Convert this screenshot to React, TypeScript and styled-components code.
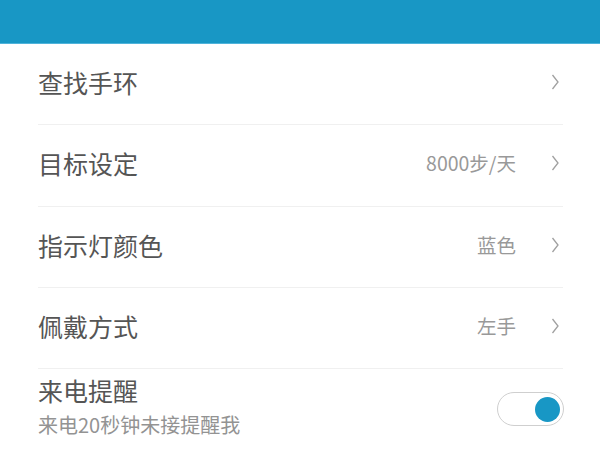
import React from "react";
import styled, { createGlobalStyle } from "styled-components";

const Global = createGlobalStyle`
  html, body { margin: 0; padding: 0; background: #ffffff; }
  body { font-family: "Noto Sans CJK SC", "Noto Sans", sans-serif; }
`;

const Page = styled.div`
  width: 600px;
  height: 450px;
  overflow: hidden;
  background: #ffffff;
`;

const Header = styled.div`
  height: 43px;
  background: #1897c5;
  border-bottom: 1px solid #4fb3da;
`;

const List = styled.div`
  display: flex;
  flex-direction: column;
  padding: 0 37px 0 38px;
`;

const Row = styled.div`
  display: flex;
  align-items: center;
  height: 81.3px;
  padding-bottom: 4px;
  box-sizing: border-box;
  border-bottom: 1px solid #f0f0f0;
`;

const ToggleRow = styled.div`
  display: flex;
  align-items: center;
  padding: 6px 0 20px;
`;

const TextCol = styled.div`
  flex: 1;
  display: flex;
  flex-direction: column;
  gap: 8px;
`;

const Title = styled.div`
  flex: 1;
  font-size: 25px;
  line-height: 30px;
  color: #555555;
`;

const Sub = styled.div`
  font-size: 20px;
  line-height: 24px;
  color: #939393;
`;

const Value = styled.span`
  font-size: 19.5px;
  line-height: 24px;
  color: #999999;
  margin-right: 35px;
`;

const Chevron = styled.svg`
  width: 8px;
  height: 16px;
  margin-right: 4px;
`;

const Switch = styled.div<{ on: boolean }>`
  width: 59px;
  height: 32px;
  margin-top: 6px;
  border: 1px solid #cfcfcf;
  border-radius: 17px;
  display: flex;
  align-items: center;
  justify-content: ${(p) => (p.on ? "flex-end" : "flex-start")};
  padding: 0 3px;
  box-sizing: content-box;
  margin-right: -1px;
`;

const Knob = styled.div`
  width: 25px;
  height: 25px;
  border-radius: 50%;
  background: #1897c5;
`;

const Arrow = () => (
  <Chevron viewBox="0 0 8 16">
    <path d="M1.5 1 L7 8 L1.5 15" fill="none" stroke="#a0a0a0" strokeWidth="1.3" />
  </Chevron>
);

const items = [
  { title: "查找手环", value: "" },
  { title: "目标设定", value: "8000步/天" },
  { title: "指示灯颜色", value: "蓝色" },
  { title: "佩戴方式", value: "左手" },
];

export default function App() {
  return (
    <Page>
      <Global />
      <Header />
      <List>
        {items.map((it) => (
          <Row key={it.title}>
            <Title>{it.title}</Title>
            {it.value && <Value>{it.value}</Value>}
            <Arrow />
          </Row>
        ))}
        <ToggleRow>
          <TextCol>
            <Title>来电提醒</Title>
            <Sub>来电20秒钟未接提醒我</Sub>
          </TextCol>
          <Switch on>
            <Knob />
          </Switch>
        </ToggleRow>
      </List>
    </Page>
  );
}
